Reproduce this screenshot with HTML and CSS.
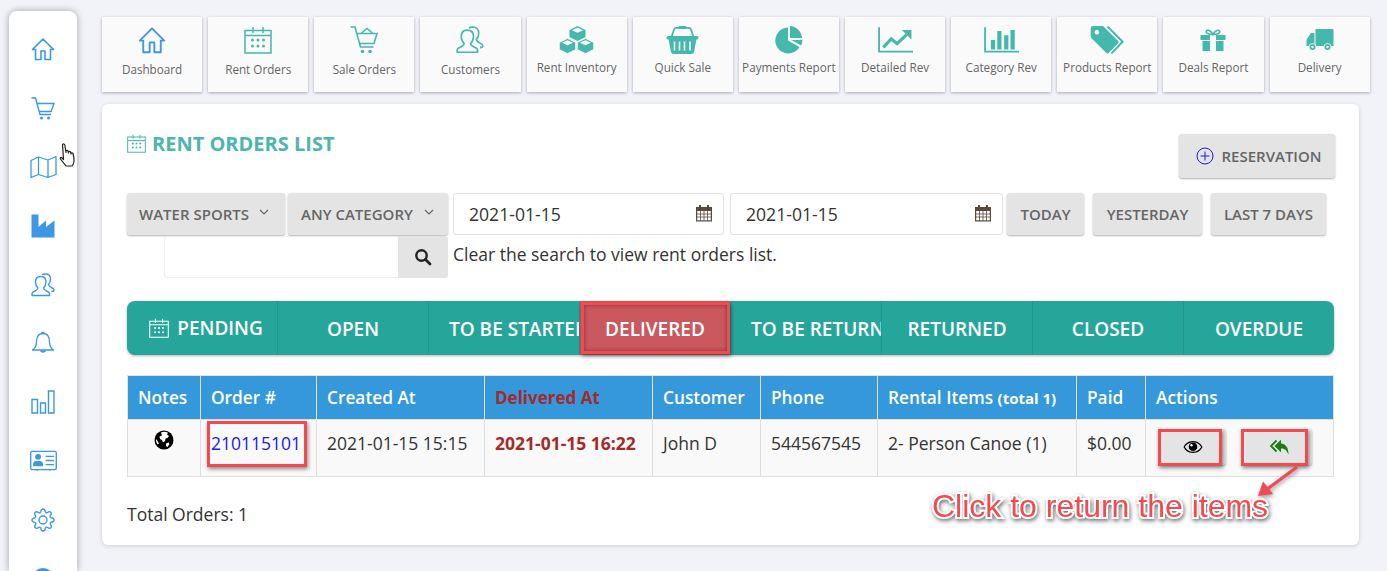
FILE: index.html
```html
<!DOCTYPE html>
<html lang="en">
<head>
<meta charset="utf-8">
<title>Rent Orders List</title>
<link rel="stylesheet" href="styles.css">
</head>
<body>
<svg class="defs" aria-hidden="true">
  <symbol id="i-home" viewBox="0 0 24 24"><path fill="none" stroke="currentColor" stroke-width="1.6" stroke-linejoin="round" d="M12 2 1.5 12.5h3V22.500h5.500V14h4v8.500h5.500V12.500h3z"/></symbol>
  <symbol id="i-cart" viewBox="0 0 24 24"><path fill="none" stroke="currentColor" stroke-width="1.4" d="M.5 2H4.500L9 18.500H20M6.500 7.500H23L20 15.500H8.500"/><circle cx="10.500" cy="22" r="1.500" fill="currentColor"/><circle cx="17.500" cy="22" r="1.500" fill="currentColor"/></symbol>
  <symbol id="i-sale" viewBox="0 0 28 28"><path fill="none" stroke="currentColor" stroke-width="1.600" d="M.5 1H5L10.500 21H23.500M7 7.500H27L24 17.500H9.500M11.500 7 17 2.500 22.500 7"/><circle cx="12.500" cy="25.500" r="1.800" fill="currentColor"/><circle cx="20" cy="25.500" r="1.800" fill="currentColor"/></symbol>
  <symbol id="i-map" viewBox="0 0 27 23"><path fill="none" stroke="currentColor" stroke-width="1.300" stroke-linejoin="round" d="M1 5 8.500 1.500 18 4.500 26 1V19L18 22 8.500 19 1 22ZM8.500 1.500V19M18 4.500V22"/></symbol>
  <symbol id="i-factory" viewBox="0 0 24 24"><path fill="currentColor" d="M.5.5H7.500V13L15 6.500V13L23.500 6.500V23.500H.5z"/></symbol>
  <symbol id="i-users" viewBox="0 0 24 24"><path fill="none" stroke="currentColor" stroke-width="1.400" stroke-linejoin="round" d="M9.500 3.500C6 3.500 4.500 6 4.500 9c0 2.500 1 4.500 2.500 6 0 1.500-1 2-3 3-2 .8-3 1.500-3 2.500V22.500H18.500V20.500c0-1-1-1.700-3-2.500-2-1-3-1.500-3-3 1.500-1.500 2.500-3.500 2.500-6 0-3-1.500-5.500-5.500-5.500zM11 1.800C12 1 13.500 1 14.500 1c3.500 0 5 2.500 5 5 0 2.500-1 4.500-2 5.500 0 1.500 1 2 3 3 1.500.7 2.500 1.300 2.500 2.500 0 1-1 1.500-2.500 1.500"/></symbol>
  <symbol id="i-bell" viewBox="0 0 23 24"><path fill="none" stroke="currentColor" stroke-width="1.300" stroke-linejoin="round" d="M11.500 2.500C6.500 2.500 5 6.500 5 11c0 4-2 6.500-4 8H22c-2-1.500-4-4-4-8 0-4.500-1.500-8.500-6.500-8.500z"/><path fill="none" stroke="currentColor" stroke-width="1.300" d="M10 2.500C10 1 13 1 13 2.500"/><path fill="currentColor" d="M8.500 19.500h6C14 22.500 9 22.500 8.500 19.500z"/></symbol>
  <symbol id="i-bars" viewBox="0 0 24 24"><path fill="none" stroke="currentColor" stroke-width="1.400" d="M1 9.500H6.500V23H1zM9.500 13H14.500V23H9.500zM17.500 1H23V23H17.500z"/></symbol>
  <symbol id="i-card" viewBox="0 0 26 20"><rect x=".7" y=".7" width="24.600" height="17.600" rx="1.500" fill="none" stroke="currentColor" stroke-width="1.300"/><circle cx="7.800" cy="6" r="2.800" fill="currentColor"/><path fill="currentColor" d="M3 15V13c0-2 1.500-3 3-3h3.500c1.500 0 3 1 3 3v2z"/><path fill="none" stroke="currentColor" stroke-width="1.300" d="M15 5.500H23M15 9.500H23M15 13.500H23M7 18v1.500M19 18v1.500"/></symbol>
  <symbol id="i-gear" viewBox="0 0 24 24"><g fill="none" stroke="currentColor" stroke-width="1.400"><circle cx="12" cy="12" r="4"/><path d="M19.400 15a1.650 1.650 0 0 0 .33 1.820l.06.06a2 2 0 0 1 0 2.830 2 2 0 0 1-2.830 0l-.06-.06a1.650 1.650 0 0 0-1.820-.33 1.650 1.650 0 0 0-1 1.510V21a2 2 0 0 1-2 2 2 2 0 0 1-2-2v-.09A1.650 1.650 0 0 0 9 19.400a1.650 1.650 0 0 0-1.820.33l-.06.06a2 2 0 0 1-2.830 0 2 2 0 0 1 0-2.830l.06-.06a1.650 1.650 0 0 0 .33-1.820 1.650 1.650 0 0 0-1.510-1H3a2 2 0 0 1-2-2 2 2 0 0 1 2-2h.09A1.650 1.650 0 0 0 4.600 9a1.650 1.650 0 0 0-.33-1.820l-.06-.06a2 2 0 0 1 0-2.830 2 2 0 0 1 2.830 0l.06.06a1.650 1.650 0 0 0 1.820.33H9a1.650 1.650 0 0 0 1-1.510V3a2 2 0 0 1 2-2 2 2 0 0 1 2 2v.09a1.650 1.650 0 0 0 1 1.510 1.650 1.650 0 0 0 1.820-.33l.06-.06a2 2 0 0 1 2.830 0 2 2 0 0 1 0 2.830l-.06.06a1.650 1.650 0 0 0-.33 1.820V9a1.650 1.650 0 0 0 1.510 1H21a2 2 0 0 1 2 2 2 2 0 0 1-2 2h-.09a1.650 1.650 0 0 0-1.510 1z"/></g></symbol>
  <symbol id="i-user" viewBox="0 0 24 24"><circle cx="12" cy="12" r="11" fill="currentColor"/></symbol>
  <symbol id="i-cal" viewBox="0 0 28 28"><path fill="none" stroke="currentColor" stroke-width="1.500" d="M1 4.500H27V27H1zM9 1V7M19 1V7M1 9.500H27"/><g fill="currentColor"><circle cx="14" cy="14" r="1.500"/><circle cx="19.500" cy="14" r="1.500"/><circle cx="8.500" cy="14" r="1.500"/><circle cx="14" cy="20" r="1.500"/><circle cx="19.500" cy="20" r="1.500"/><circle cx="8.500" cy="20" r="1.500"/></g></symbol>
  <symbol id="i-cubes" viewBox="0 0 34 28">
    <path fill="currentColor" d="M18 0 26 4V11L18 15 10 11V4Z"/><path fill="#fff" d="M18 1.700 23.500 4.200 18 6.700 12.500 4.200Z"/>
    <path fill="currentColor" stroke="#fafafa" stroke-width=".6" d="M8 12.500 16 16.500V23.500L8 27.500 0 23.500V16.500Z"/><path fill="#fff" d="M8 14.200 13.500 16.700 8 19.200 2.500 16.700Z"/>
    <path fill="currentColor" stroke="#fafafa" stroke-width=".6" d="M26 12.500 34 16.500V23.500L26 27.500 18 23.500V16.500Z"/><path fill="#fff" d="M26 14.200 31.500 16.700 26 19.200 20.500 16.700Z"/>
  </symbol>
  <symbol id="i-basket" viewBox="0 0 32 28"><path fill="none" stroke="currentColor" stroke-width="1.800" d="M5 11 7.500 3.500Q8 1.800 10 1.800H22Q24 1.800 24.500 3.500L27 11"/><rect x="12" width="8" height="3" rx="1" fill="currentColor"/><rect y="10" width="32" height="3.500" rx="1.700" fill="currentColor"/><path fill="currentColor" d="M2 13H30L27.500 26Q27 28 25 28H7Q5 28 4.500 26Z"/><path stroke="#fafafa" stroke-width="1.600" d="M8 15.500V24.500M13 15.500V24.500M18 15.500V24.500M23.500 15.500V24.500"/></symbol>
  <symbol id="i-pie" viewBox="0 0 28 28"><g fill="currentColor"><path d="M13 1.500A13 13 0 1 0 24.500 21L13 14.500Z"/><path d="M15 0A13 13 0 0 1 27 12H15Z"/><path d="M16.500 14H27.500A13 13 0 0 1 26 19.500Z"/></g></symbol>
  <symbol id="i-trend" viewBox="0 0 33 24"><path fill="none" stroke="currentColor" stroke-width="1.700" d="M1 0V23H33"/><path fill="none" stroke="currentColor" stroke-width="3" d="M5 19 12.500 11 18 15.500 27 7"/><path fill="currentColor" d="M22.500 2.500H31.500V11.500Z"/></symbol>
  <symbol id="i-catbars" viewBox="0 0 33 24"><path fill="none" stroke="currentColor" stroke-width="1.700" d="M1 0V23H33"/><path fill="currentColor" d="M6.500 12H10.500V21H6.500zM12.500 3.500H16.500V21H12.500zM19 7.500H23V21H19zM25 2.500H29V21H25z"/></symbol>
  <symbol id="i-tags" viewBox="0 0 30 25"><path fill="currentColor" d="M2 0H11L24.500 13.500Q25.500 14.500 24.500 15.500L16 24Q15 25 14 24L.7 11Q0 10.300 0 9V2Q0 0 2 0Z"/><circle cx="5.500" cy="5.500" r="2" fill="#fafafa"/><path fill="none" stroke="currentColor" stroke-width="1.800" d="M15 .5 28.500 14 18.500 24.500"/></symbol>
  <symbol id="i-gift" viewBox="0 0 25 22"><path fill="none" stroke="currentColor" stroke-width="1.600" d="M12.500 5.500C10 1 7 .5 6 2c-1 1.500 1 3.500 6.500 3.500C18 5.500 20 3.500 19 2c-1-1.500-4-1-6.500 3.500z"/><path fill="currentColor" d="M0 6H9.500V11H0zM15.500 6H25V11H15.500zM2 12H9.500V22H2zM15.500 12H23V22H15.500z"/></symbol>
  <symbol id="i-truck" viewBox="0 0 27 22"><path fill="currentColor" d="M9 0H26Q27 0 27 1V17H9zM1 9 4.500 4H8V17H0V11Z"/><circle cx="6" cy="18" r="3.700" fill="#fafafa"/><circle cx="21" cy="18" r="3.700" fill="#fafafa"/><circle cx="6" cy="18" r="3" fill="currentColor"/><circle cx="21" cy="18" r="3" fill="currentColor"/><circle cx="6" cy="18" r="1.200" fill="#fafafa"/><circle cx="21" cy="18" r="1.200" fill="#fafafa"/></symbol>
  <symbol id="i-datecal" viewBox="0 0 18 18"><path fill="#5a4a3c" d="M1 3H4V1H6V3H12V1H14V3H17V17.500H1z"/><path fill="#fff" d="M2.200 7H15.800V16.300H2.200z"/><path stroke="#5a4a3c" stroke-width=".8" d="M2 10H16M2 13H16M5.500 7V17M9 7V17M12.500 7V17"/></symbol>
</svg>

<nav class="sidebar">
  <a class="side-item"><svg class="side-icon"><use href="#i-home"/></svg></a>
  <a class="side-item"><svg class="side-icon"><use href="#i-cart"/></svg></a>
  <a class="side-item"><svg class="side-icon side-icon--wide"><use href="#i-map"/></svg></a>
  <a class="side-item"><svg class="side-icon"><use href="#i-factory"/></svg></a>
  <a class="side-item"><svg class="side-icon"><use href="#i-users"/></svg></a>
  <a class="side-item"><svg class="side-icon"><use href="#i-bell"/></svg></a>
  <a class="side-item"><svg class="side-icon"><use href="#i-bars"/></svg></a>
  <a class="side-item"><svg class="side-icon side-icon--wide"><use href="#i-card"/></svg></a>
  <a class="side-item"><svg class="side-icon"><use href="#i-gear"/></svg></a>
  <a class="side-item"><svg class="side-icon"><use href="#i-user"/></svg></a>
</nav>

<main class="main">
  <div class="tiles">
    <a class="tile tile--blue"><svg class="tile-icon"><use href="#i-home"/></svg><span class="tile-label">Dashboard</span></a>
    <a class="tile"><svg class="tile-icon"><use href="#i-cal"/></svg><span class="tile-label">Rent Orders</span></a>
    <a class="tile"><svg class="tile-icon"><use href="#i-sale"/></svg><span class="tile-label">Sale Orders</span></a>
    <a class="tile"><svg class="tile-icon"><use href="#i-users"/></svg><span class="tile-label">Customers</span></a>
    <a class="tile tile--tight"><svg class="tile-icon tile-icon--wide"><use href="#i-cubes"/></svg><span class="tile-label">Rent Inventory</span></a>
    <a class="tile tile--tight"><svg class="tile-icon tile-icon--wide"><use href="#i-basket"/></svg><span class="tile-label">Quick Sale</span></a>
    <a class="tile tile--tight"><svg class="tile-icon"><use href="#i-pie"/></svg><span class="tile-label">Payments Report</span></a>
    <a class="tile tile--tight"><svg class="tile-icon tile-icon--wide"><use href="#i-trend"/></svg><span class="tile-label">Detailed Rev</span></a>
    <a class="tile tile--tight"><svg class="tile-icon tile-icon--wide"><use href="#i-catbars"/></svg><span class="tile-label">Category Rev</span></a>
    <a class="tile tile--tight"><svg class="tile-icon tile-icon--wide"><use href="#i-tags"/></svg><span class="tile-label">Products Report</span></a>
    <a class="tile tile--tight"><svg class="tile-icon tile-icon--small"><use href="#i-gift"/></svg><span class="tile-label">Deals Report</span></a>
    <a class="tile tile--tight"><svg class="tile-icon tile-icon--small"><use href="#i-truck"/></svg><span class="tile-label">Delivery</span></a>
  </div>

  <section class="card">
    <header class="card-head">
      <h1 class="title"><svg class="title-icon"><use href="#i-cal"/></svg>RENT ORDERS LIST</h1>
      <button class="btn btn--reserve"><svg class="plus" viewBox="0 0 18 18"><circle cx="9" cy="9" r="8" fill="none" stroke="#1a1aee" stroke-width="1"/><path stroke="#1a1aee" stroke-width="1" d="M9 4.500V13.500M4.500 9H13.500"/></svg>RESERVATION</button>
    </header>

    <div class="filters">
      <button class="btn btn--select btn--sports">WATER SPORTS<svg class="chev" viewBox="0 0 10 6"><path fill="none" stroke="#666" stroke-width="1.200" d="M1 1 5 5 9 1"/></svg></button>
      <button class="btn btn--select btn--cat">ANY CATEGORY<svg class="chev" viewBox="0 0 10 6"><path fill="none" stroke="#666" stroke-width="1.200" d="M1 1 5 5 9 1"/></svg></button>
      <div class="date date--from"><span>2021-01-15</span><svg class="date-icon"><use href="#i-datecal"/></svg></div>
      <div class="date date--to"><span>2021-01-15</span><svg class="date-icon"><use href="#i-datecal"/></svg></div>
      <button class="btn btn--today">TODAY</button>
      <button class="btn btn--yesterday">YESTERDAY</button>
      <button class="btn btn--week">LAST 7 DAYS</button>
    </div>

    <div class="search-row">
      <div class="search-input"></div>
      <div class="search-btn"><svg class="search-icon" viewBox="0 0 18 18"><circle cx="7.500" cy="7.500" r="5.200" fill="none" stroke="#222" stroke-width="2.400"/><path stroke="#222" stroke-width="2.800" stroke-linecap="round" d="M11.500 11.500 16 16"/></svg></div>
      <span class="search-hint">Clear the search to view rent orders list.</span>
    </div>

    <div class="tabs">
      <a class="tab tab--first"><svg class="tab-icon"><use href="#i-cal"/></svg>PENDING</a>
      <a class="tab">OPEN</a>
      <a class="tab">TO BE STARTED</a>
      <a class="tab tab--active">DELIVERED</a>
      <a class="tab">TO BE RETURNED</a>
      <a class="tab">RETURNED</a>
      <a class="tab">CLOSED</a>
      <a class="tab">OVERDUE</a>
    </div>

    <table class="orders">
      <colgroup>
        <col class="c-notes"><col class="c-order"><col class="c-created"><col class="c-delivered"><col class="c-customer"><col class="c-phone"><col class="c-items"><col class="c-paid"><col class="c-actions">
      </colgroup>
      <thead>
        <tr>
          <th>Notes</th><th>Order #</th><th>Created At</th><th class="is-delivered">Delivered At</th><th>Customer</th><th>Phone</th><th>Rental Items <small class="total">(total 1)</small></th><th>Paid</th><th>Actions</th>
        </tr>
      </thead>
      <tbody>
        <tr>
          <td class="cell-globe"><svg class="globe" viewBox="0 0 20 20"><circle cx="10" cy="10" r="9.500" fill="#000"/><path fill="#fff" d="M7 2.500C9 1.500 12 1.500 14 2.800L13 4.500 15 6 13.500 8 11.500 8.500 11 11 9 12.500 8 10 6 9 5.500 6.500 8 5.500zM12 13.500 14.500 12.500 15.500 14 13.500 17 12 16zM2 9 3.500 11 5 13.500 3.800 14.500C2.500 13 1.800 11 2 9z"/></svg></td>
          <td><a class="order-link">210115101</a></td>
          <td>2021-01-15 15:15</td>
          <td class="delivered-value">2021-01-15 16:22</td>
          <td>John D</td>
          <td>544567545</td>
          <td>2- Person Canoe (1)</td>
          <td>$0.00</td>
          <td>
            <div class="actions">
              <button class="act"><svg class="act-icon" viewBox="0 0 20 16"><path fill="#000" d="M10 2C5 2 2 5 .5 8 2 11 5 14 10 14s8-3 9.500-6C18 5 15 2 10 2zm0 1.200c4 0 6.800 2.300 8.200 4.800-1.400 2.500-4.200 4.800-8.200 4.800S3.200 10.500 1.800 8C3.200 5.500 6 3.200 10 3.200z"/><circle cx="10" cy="7.800" r="4.300" fill="#000"/><circle cx="8.500" cy="6.300" r="1.200" fill="#fff"/></svg></button>
              <button class="act"><svg class="act-icon" viewBox="0 0 20 16"><path fill="#1b7d12" d="M12 .8V4.500C17 5 19.500 9 19.500 15.500 17.500 11 15.500 9.500 12 9.500V13.200L5.500 7Z"/><path fill="none" stroke="#1b7d12" stroke-width="1.800" d="M7.500 1.500 2 7 7.500 12.500"/></svg></button>
            </div>
          </td>
        </tr>
      </tbody>
    </table>

    <p class="total-orders">Total Orders: 1</p>
  </section>
</main>

<div class="mark mark--tab"></div>
<div class="mark mark--order"></div>
<div class="mark mark--eye"></div>
<div class="mark mark--return"></div>
<svg class="note-arrow" viewBox="0 0 50 40"><path fill="none" stroke="#f44a4f" stroke-width="3.200" d="M43 2 12 25"/><path fill="#f44a4f" d="M4 31 9 16.500 19 29Z"/></svg>
<div class="note-text">Click to return the items</div>
<svg class="cursor" viewBox="0 0 18 25"><path fill="#fff" stroke="#222" stroke-width="1.200" stroke-linejoin="round" d="M3.500 1.500C4.300.5 5.500 1 5.800 2L7 9.500V8c.3-1 1.700-1 2 0l.5 2V9c.3-1 1.700-1 2 0l.5 2v-.5c.3-1 1.700-1 2 0 .8 3 1.200 6 1 8-.2 2-1 3.500-2 4.500H7c-1-1.500-3-3.500-5.500-7-.7-1 .1-2 1-1.500l2 2z"/></svg>
</body>
</html>
```
FILE: styles.css
```css
* { box-sizing: border-box; }
html, body { height: 100%; }
body {
  margin: 0;
  height: 571px;
  overflow: hidden;
  display: flex;
  align-items: flex-start;
  position: relative;
  background: #f2f3f8;
  font-family: "Open Sans", "Liberation Sans", sans-serif;
  color: #333;
}
.defs { display: none; }

/* sidebar */
.sidebar {
  flex: 0 0 68px;
  height: 560px;
  margin: 11px 0 0 9px;
  padding-top: 9px;
  background: #fff;
  border-radius: 8px 8px 0 0;
  box-shadow: 0 0 7px rgba(0, 0, 0, .35);
  color: #3d97e5;
  display: flex;
  flex-direction: column;
  overflow: hidden;
}
.side-item { flex: 0 0 58.8px; display: flex; align-items: center; justify-content: center; }
.side-icon { width: 24px; height: 24px; }
.side-icon--wide { width: 27px; }

/* main */
.main { flex: 0 0 1257px; min-width: 0; margin-left: 25px; }
.tiles { display: flex; gap: 6px; margin-top: 17px; width: 1268px; }
.tile {
  flex: 0 0 100.15px;
  height: 75px;
  padding-top: 9px;
  background: #fafafa;
  box-shadow: 0 1px 3px rgba(0, 0, 0, .3);
  color: #45b8ac;
  display: flex;
  flex-direction: column;
  align-items: center;
}
.tile--blue { color: #3d97e5; }
.tile-icon { width: 28px; height: 28px; flex: none; }
.tile-icon--wide { width: 35px; }
.tile-icon--small { margin-top: 3px; height: 22px; width: 28px; }
.tile-label {
  margin-top: 8px;
  font-size: 11.7px;
  line-height: 15px;
  color: #666;
  white-space: nowrap;
}
.tile--tight .tile-label { margin-top: 6px; }
.tile--tight .tile-icon--small + .tile-label { margin-top: 9px; }

.card {
  margin-top: 12px;
  height: 441px;
  padding: 30px 25px 0;
  background: #fff;
  border-radius: 6px;
  box-shadow: 0 1px 4px rgba(0, 0, 0, .15);
}
.card-head { display: flex; justify-content: space-between; align-items: flex-start; margin-right: -1px; }
.title {
  margin: 0;
  display: flex;
  align-items: center;
  gap: 6px;
  height: 19px;
  font-size: 20px;
  font-weight: 700;
  color: #4db6ac;
}
.title-icon { width: 19px; height: 19px; color: #45b8ac; }

.btn {
  height: 42px;
  border: 0;
  border-radius: 3px;
  background: #e4e4e4;
  box-shadow: 0 1px 2px rgba(0, 0, 0, .3);
  color: #666;
  font-family: inherit;
  font-size: 15px;
  font-weight: 600;
  padding: 0;
  display: inline-flex;
  align-items: center;
  justify-content: center;
}
.btn--reserve { width: 156px; height: 44px; gap: 7px; padding-left: 4px; }
.plus { width: 18px; height: 18px; }

.filters { display: flex; margin-top: 15px; height: 42px; }
.btn--select { justify-content: flex-start; padding-left: 12px; }
.btn--sports { width: 158px; }
.btn--cat { width: 160px; margin-left: 3px; padding-left: 13px; }
.chev { width: 10px; height: 6px; margin: -4px 0 0 10px; }
.btn--cat .chev { margin-left: 11px; }
.date {
  height: 42px;
  margin-left: 5px;
  padding: 0 10px 0 15px;
  border: 1px solid #e3e3e3;
  border-radius: 3px;
  display: flex;
  align-items: center;
  justify-content: space-between;
  font-size: 17.6px;
  color: #333;
}
.date--from { width: 271px; }
.date--to { width: 273px; margin-left: 6px; }
.date-icon { width: 18px; height: 18px; margin-top: -2px; }
.btn--today { width: 77px; margin-left: 4px; }
.btn--yesterday { width: 109px; margin-left: 9px; }
.btn--week { width: 115px; margin-left: 9px; }

.search-row { display: flex; align-items: center; height: 43px; padding-left: 37px; }
.search-input { width: 234px; height: 42px; border: 1px solid #eee; border-right: 0; border-radius: 3px 0 0 3px; }
.search-btn { width: 50px; height: 42px; background: #e4e4e4; border-radius: 0 3px 3px 0; display: flex; align-items: center; justify-content: center; }
.search-icon { width: 18px; height: 18px; }
.search-hint { margin: -5px 0 0 5px; font-size: 17.5px; color: #333; }

.tabs {
  display: flex;
  height: 54px;
  margin-top: 23px;
  border-radius: 8px;
  overflow: hidden;
  background: #26a69a;
  box-shadow: 0 1px 3px rgba(0, 0, 0, .3);
}
.tab {
  flex: 0 0 151px;
  min-width: 0;
  padding: 0 20px;
  overflow: hidden;
  white-space: nowrap;
  line-height: 56px;
  text-align: center;
  color: #fff;
  font-size: 19px;
  font-weight: 600;
  border-left: 1px solid #22978c;
}
.tab--first {
  flex-basis: 150px;
  border-left: 0;
  padding: 0 0 0 8px;
  display: flex;
  align-items: center;
  justify-content: center;
  gap: 8px;
}
.tab--active { background: #c9595e; }
.tab-icon { width: 20px; height: 20px; }

.orders {
  width: 1207px;
  margin-top: 20px;
  border-collapse: collapse;
  table-layout: fixed;
  font-size: 17.5px;
}
.c-notes { width: 73px; }
.c-order { width: 116px; }
.c-created, .c-delivered { width: 168px; }
.c-customer { width: 108px; }
.c-phone { width: 117px; }
.c-items { width: 199px; }
.c-paid { width: 69px; }
.orders th {
  height: 44px;
  padding: 0 10px;
  background: #3498db;
  color: #fff;
  border: 1px solid #e3e3e3;
  border-bottom: 0;
  font-weight: 600;
  font-size: 17.3px;
  text-align: left;
  white-space: nowrap;
}
.orders th.is-delivered { color: #a52a2a; font-weight: 700; font-size: 17px; }
.total { font-size: 15px; font-weight: 700; }
.orders td {
  height: 57px;
  padding: 11px 10px 0;
  vertical-align: top;
  background: #f9f9f9;
  border: 1px solid #dedede;
  white-space: nowrap;
}
.orders td.cell-globe { text-align: center; padding-top: 10px; }
.globe { width: 20px; height: 20px; }
.order-link { color: #1a1aee; }
.orders td.delivered-value { color: #a52a2a; font-weight: 700; }
.orders td:last-child { padding: 9px 0 0 14px; }
.actions { display: flex; gap: 20px; }
.act {
  width: 66px;
  height: 36px;
  border: 0;
  padding: 0;
  border-radius: 3px;
  background: #e4e4e4;
  box-shadow: 0 1px 2px rgba(0, 0, 0, .3);
  display: flex;
  align-items: center;
  justify-content: center;
}
.act-icon { width: 20px; height: 16px; }
.total-orders { margin: 25px 0 0; font-size: 17.5px; line-height: 24px; }

/* annotations drawn over the page */
.mark {
  position: absolute;
  border: 3px solid #f44a4f;
  box-shadow: 1px 2px 4px rgba(0, 0, 0, .45), inset 0 0 4px rgba(0, 0, 0, .4);
}
.mark--tab { left: 581px; top: 302px; width: 149px; height: 52px; }
.mark--order { left: 207px; top: 421px; width: 100px; height: 46px; box-shadow: 1px 2px 4px rgba(0, 0, 0, .45); }
.mark--eye { left: 1158px; top: 429px; width: 64px; height: 37px; box-shadow: 1px 2px 4px rgba(0, 0, 0, .45); }
.mark--return { left: 1241px; top: 429px; width: 67px; height: 37px; box-shadow: 1px 2px 4px rgba(0, 0, 0, .45); }
.note-arrow { position: absolute; left: 1254px; top: 465px; width: 50px; height: 40px; filter: drop-shadow(1px 2px 2px rgba(0, 0, 0, .4)); }
.note-text {
  position: absolute;
  left: 932px;
  top: 488px;
  font-family: "Liberation Sans", Arial, sans-serif;
  font-size: 32px;
  line-height: 36px;
  white-space: nowrap;
  color: #f44a4f;
  -webkit-text-stroke: 4px #fff;
  paint-order: stroke fill;
  filter: drop-shadow(1px 2px 2px rgba(0, 0, 0, .55));
}
.cursor { position: absolute; left: 59px; top: 143px; width: 18px; height: 25px; }
```
